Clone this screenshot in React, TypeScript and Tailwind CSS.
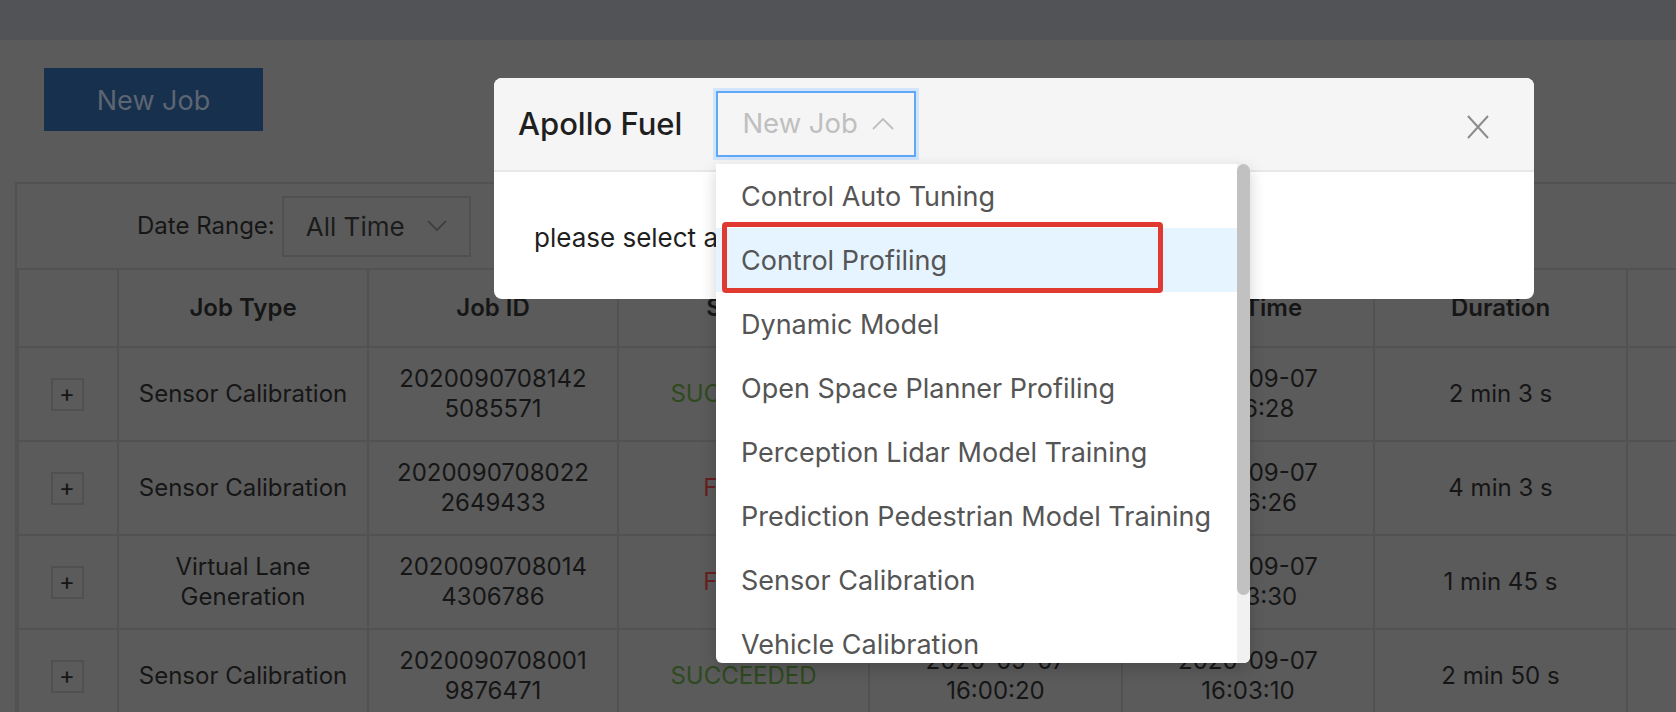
import { useState } from 'react';

type Row = {
  type: string[];
  id: string[];
  status: 'SUCCEEDED' | 'FAILED';
  start: string[];
  end: string[];
  duration: string;
};

const rows: Row[] = [
  { type: ['Sensor Calibration'], id: ['2020090708142', '5085571'], status: 'SUCCEEDED', start: ['2020-09-07', '16:14:25'], end: ['2020-09-07', '16:16:28'], duration: '2 min 3 s' },
  { type: ['Sensor Calibration'], id: ['2020090708022', '2649433'], status: 'FAILED', start: ['2020-09-07', '16:02:23'], end: ['2020-09-07', '16:06:26'], duration: '4 min 3 s' },
  { type: ['Virtual Lane', 'Generation'], id: ['2020090708014', '4306786'], status: 'FAILED', start: ['2020-09-07', '16:01:45'], end: ['2020-09-07', '16:03:30'], duration: '1 min 45 s' },
  { type: ['Sensor Calibration'], id: ['2020090708001', '9876471'], status: 'SUCCEEDED', start: ['2020-09-07', '16:00:20'], end: ['2020-09-07', '16:03:10'], duration: '2 min 50 s' },
];

const jobTypes = [
  'Control Auto Tuning',
  'Control Profiling',
  'Dynamic Model',
  'Open Space Planner Profiling',
  'Perception Lidar Model Training',
  'Prediction Pedestrian Model Training',
  'Sensor Calibration',
  'Vehicle Calibration',
  'Virtual Lane Generation',
];

// last column is off screen, its title is not visible
const headers = ['', 'Job Type', 'Job ID', 'Status', 'Start Time', 'End Time', 'Duration', ''];

function Lines({ lines }: { lines: string[] }) {
  return (
    <div className="flex flex-col items-center leading-[30px]">
      {lines.map((l) => (
        <span key={l}>{l}</span>
      ))}
    </div>
  );
}

function JobTable() {
  const cell = 'flex items-center justify-center border-l-2 border-t-2 border-[#525252] text-center';
  return (
    <div className="mt-[51px] w-[1720px] border-2 border-[#525252] text-[24px] text-[#161616]">
      <div className="flex h-[84px] items-center pl-[120px]">
        <span className="mr-[7px]">Date Range:</span>
        <div className="flex h-[61px] w-[189px] items-center justify-between border-2 border-[#505050] pl-[22px] pr-[22px] text-[26px] text-[#1c1c1c]">
          All Time
          <svg width="20" height="12" viewBox="0 0 20 12" fill="none" stroke="#3c3c3c" strokeWidth="1.6">
            <path d="M1 1l9 9 9-9" />
          </svg>
        </div>
      </div>
      <div className="grid grid-cols-[100px_250px_250px_251px_253px_252px_253px_1fr]">
        {headers.map((h, i) => (
          <div key={i} className={`${cell} h-[78px] font-semibold ${i === 0 ? 'border-l-0' : ''}`}>
            {h}
          </div>
        ))}
        {rows.map((r) => (
          <div key={r.id.join('')} className="contents">
            <div className={`${cell} h-[94px] border-l-0 pr-[2px]`}>
              <div className="flex h-[33px] w-[33px] items-center justify-center border-2 border-[#505050] text-[24px] leading-none">+</div>
            </div>
            <div className={`${cell} h-[94px]`}>
              <Lines lines={r.type} />
            </div>
            <div className={`${cell} h-[94px]`}>
              <Lines lines={r.id} />
            </div>
            <div className={`${cell} h-[94px] ${r.status === 'SUCCEEDED' ? 'text-[#2e4a1e]' : 'text-[#681e20]'}`}>{r.status}</div>
            <div className={`${cell} h-[94px]`}>
              <Lines lines={r.start} />
            </div>
            <div className={`${cell} h-[94px]`}>
              <Lines lines={r.end} />
            </div>
            <div className={`${cell} h-[94px]`}>{r.duration}</div>
            <div className={`${cell} h-[94px]`} />
          </div>
        ))}
      </div>
    </div>
  );
}

function JobDropdown() {
  const [active] = useState('Control Profiling');
  return (
    <div className="absolute left-[716px] top-[164px] flex h-[499px] w-[534px] overflow-hidden rounded-b-[6px] bg-white shadow-[0_6px_16px_rgba(0,0,0,0.18)]">
      <ul className="flex-1 text-[27px] text-[#555555]">
        {jobTypes.map((t) => (
          <li key={t} className={`flex h-[64px] items-center pl-[25px] pt-[2px] ${t === active ? 'bg-[#e6f4ff]' : ''}`}>
            {t}
          </li>
        ))}
      </ul>
      <div className="w-[13px] bg-[#f1f1f1]">
        <div className="h-[431px] rounded-full bg-[#c1c1c1]" />
      </div>
    </div>
  );
}

export default function App() {
  return (
    <div className="relative h-[712px] w-[1676px] overflow-hidden bg-[#5b5b5b] font-['Inter',sans-serif]">
      <div className="h-10 bg-[#525356]" />
      <div className="pl-[15px] pt-[28px]">
        <button className="ml-[29px] h-[63px] w-[219px] bg-[#17304e] pt-[4px] text-[27px] text-[#5d6570]">New Job</button>
        <JobTable />
      </div>

      {/* modal */}
      <div className="absolute left-[494px] top-[78px] h-[221px] w-[1040px] overflow-hidden rounded-[8px] bg-white">
        <div className="flex h-[94px] items-center border-b-2 border-[#e8e8e8] bg-[#f5f5f5] pl-[24px] pr-[45px]">
          <span className="text-[31px] font-medium text-[#1f1f1f]">Apollo Fuel</span>
          <div className="ml-[34px] flex h-[66px] w-[200px] items-center border-2 border-[#5fa8f6] pl-[24px] text-[27.5px] text-[#bfbfbf] shadow-[0_0_0_3px_#d3e5fb]">
            New Job
            <svg className="ml-[14px]" width="22" height="12" viewBox="0 0 22 12" fill="none" stroke="#bfbfbf" strokeWidth="1.8">
              <path d="M1 11l10-10 10 10" />
            </svg>
          </div>
          <svg className="ml-auto mt-[5px]" width="22" height="24" viewBox="0 0 22 24" fill="none" stroke="#8c8c8c" strokeWidth="2">
            <path d="M1 1l20 22M21 1L1 23" />
          </svg>
        </div>
        <div className="flex h-[125px] items-center pl-[40px] pt-[6px] text-[26px] text-[#1f1f1f]">please select a job type</div>
      </div>

      <JobDropdown />

      {/* highlight annotation */}
      <div className="absolute left-[722px] top-[222px] h-[71px] w-[441px] rounded-[4px] border-[5px] border-[#e0392f]" />
    </div>
  );
}
